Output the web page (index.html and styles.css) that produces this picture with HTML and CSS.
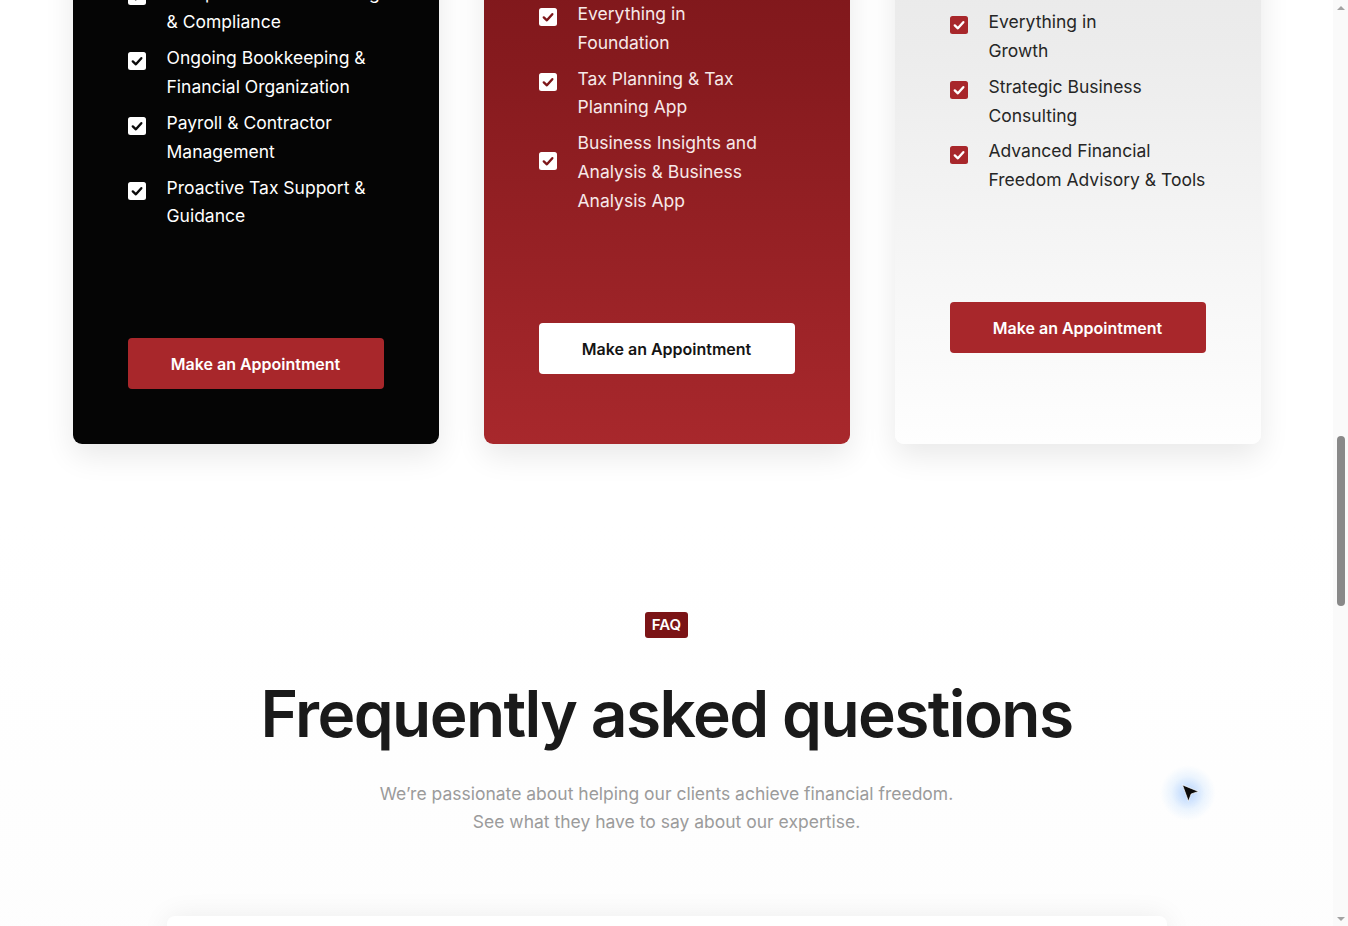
FILE: index.html
```html
<!DOCTYPE html>
<html lang="en">
<head>
<meta charset="utf-8">
<title>Pricing &amp; FAQ</title>
<link rel="stylesheet" href="styles.css">
</head>
<body>
<section class="pricing" id="pricing">
  <div class="section-intro">
    <span class="tag">Pricing</span>
    <h2 class="section-title">Plans built for your growth</h2>
    <p class="section-sub">Pick the level of support that fits your business today.<br>Upgrade any time as you grow.</p>
  </div>
  <div class="plans">
    <article class="plan plan-dark">
      <div class="plan-head">
        <h3 class="plan-name">Foundation</h3>
        <p class="plan-price">$499<span>/month</span></p>
        <p class="plan-desc">The essentials, done right.</p>
      </div>
      <ul class="plan-list">
        <li><svg class="check" viewBox="0 0 18 18"><rect width="18" height="18" rx="2.5"/><path d="M4.8 9.4 7.9 12.3 13.3 6.2"/></svg><span>Dedicated Accountant</span></li>
        <li><svg class="check" viewBox="0 0 18 18"><rect width="18" height="18" rx="2.5"/><path d="M4.8 9.4 7.9 12.3 13.3 6.2"/></svg><span>Comprehensive Tax Filing &amp; Compliance</span></li>
        <li><svg class="check" viewBox="0 0 18 18"><rect width="18" height="18" rx="2.5"/><path d="M4.8 9.4 7.9 12.3 13.3 6.2"/></svg><span>Ongoing Bookkeeping &amp; Financial Organization</span></li>
        <li><svg class="check" viewBox="0 0 18 18"><rect width="18" height="18" rx="2.5"/><path d="M4.8 9.4 7.9 12.3 13.3 6.2"/></svg><span>Payroll &amp; Contractor Management</span></li>
        <li><svg class="check" viewBox="0 0 18 18"><rect width="18" height="18" rx="2.5"/><path d="M4.8 9.4 7.9 12.3 13.3 6.2"/></svg><span>Proactive Tax Support &amp; Guidance</span></li>
      </ul>
      <a class="plan-btn" href="#">Make an Appointment</a>
    </article>

    <article class="plan plan-featured">
      <div class="plan-head">
        <h3 class="plan-name">Growth</h3>
        <p class="plan-price">$999<span>/month</span></p>
        <p class="plan-desc">For growing businesses that want a clear plan and better insight into every number that matters.</p>
      </div>
      <ul class="plan-list">
        <li><svg class="check" viewBox="0 0 18 18"><rect width="18" height="18" rx="2.5"/><path d="M4.8 9.4 7.9 12.3 13.3 6.2"/></svg><span>Everything in<br>Foundation</span></li>
        <li><svg class="check" viewBox="0 0 18 18"><rect width="18" height="18" rx="2.5"/><path d="M4.8 9.4 7.9 12.3 13.3 6.2"/></svg><span>Tax Planning &amp; Tax Planning App</span></li>
        <li><svg class="check" viewBox="0 0 18 18"><rect width="18" height="18" rx="2.5"/><path d="M4.8 9.4 7.9 12.3 13.3 6.2"/></svg><span>Business Insights and Analysis &amp; Business Analysis App</span></li>
      </ul>
      <a class="plan-btn" href="#">Make an Appointment</a>
    </article>

    <article class="plan plan-light">
      <div class="plan-head">
        <h3 class="plan-name">Freedom</h3>
        <p class="plan-price">$1,999<span>/month</span></p>
        <p class="plan-desc">Strategic, hands-on guidance for owners who are ready to build lasting financial freedom.</p>
      </div>
      <ul class="plan-list">
        <li><svg class="check" viewBox="0 0 18 18"><rect width="18" height="18" rx="2.5"/><path d="M4.8 9.4 7.9 12.3 13.3 6.2"/></svg><span>Everything in<br>Growth</span></li>
        <li><svg class="check" viewBox="0 0 18 18"><rect width="18" height="18" rx="2.5"/><path d="M4.8 9.4 7.9 12.3 13.3 6.2"/></svg><span>Strategic Business Consulting</span></li>
        <li><svg class="check" viewBox="0 0 18 18"><rect width="18" height="18" rx="2.5"/><path d="M4.8 9.4 7.9 12.3 13.3 6.2"/></svg><span>Advanced Financial Freedom Advisory &amp; Tools</span></li>
      </ul>
      <a class="plan-btn" href="#">Make an Appointment</a>
    </article>
  </div>
</section>

<section class="faq" id="faq">
  <div class="section-intro">
    <span class="tag tag-faq">FAQ</span>
    <h2 class="faq-title">Frequently asked questions</h2>
    <p class="faq-sub">We’re passionate about helping our clients achieve financial freedom.<br>See what they have to say about our expertise.</p>
  </div>
  <div class="faq-list">
    <div class="faq-item"><span>What kinds of businesses do you work with?</span><span class="faq-plus">+</span></div>
    <div class="faq-item"><span>Can I switch plans later?</span><span class="faq-plus">+</span></div>
    <div class="faq-item"><span>Do you work with clients remotely?</span><span class="faq-plus">+</span></div>
    <div class="faq-item"><span>How does the first appointment work?</span><span class="faq-plus">+</span></div>
    <div class="faq-item"><span>Which accounting software do you support?</span><span class="faq-plus">+</span></div>
  </div>
</section>

<footer class="site-footer">© Financial Freedom Partners. All rights reserved.</footer>

<div class="scrollbar" aria-hidden="true">
  <span class="sb-arrow sb-up"></span>
  <span class="sb-track"><span class="sb-thumb"></span></span>
  <span class="sb-arrow sb-down"></span>
</div>

<div class="cursor" aria-hidden="true">
  <svg viewBox="0 0 20 20"><path d="M3 2.5 17 8.2 10.6 10.4 8.2 16.8Z"/></svg>
</div>

<script src="script.js"></script>
</body>
</html>
```

FILE: styles.css
```css
* { box-sizing: border-box; }

html, body { margin: 0; padding: 0; }

body {
  margin-right: 15px;
  font-family: Inter, "Noto Sans", "Liberation Sans", sans-serif;
  color: #1a1a1a;
  background: #ffffff;
}

.section-intro {
  display: flex;
  flex-direction: column;
  align-items: center;
  text-align: center;
}

.tag {
  display: inline-block;
  background: #7b1416;
  color: #ffffff;
  font-size: 15px;
  font-weight: 600;
  line-height: 18px;
  padding: 4px 7px;
  border-radius: 3px;
}

/* ---------- Pricing ---------- */
.pricing {
  padding: 110px 0 80px;
  background: #ffffff;
}

.section-title {
  margin: 40px 0 0;
  font-size: 56px;
  line-height: 1.2;
  font-weight: 600;
  letter-spacing: -0.02em;
}

.section-sub {
  margin: 26px 0 0;
  font-size: 17.5px;
  line-height: 28px;
  color: #999999;
}

.plans {
  max-width: 1188px;
  margin: 80px auto 0;
  display: grid;
  grid-template-columns: repeat(3, 1fr);
  gap: 45px;
}

.plan {
  display: flex;
  flex-direction: column;
  padding: 55px 55px 55px;
  border-radius: 9px;
  box-shadow: 0 12px 30px rgba(0, 0, 0, 0.09);
}

.plan-dark {
  background: #050505;
  color: #ffffff;
}

.plan-featured {
  background: linear-gradient(180deg, #6a1013 0%, #861a1e 50%, #a8282c 100%);
  color: #f7e9e9;
}

.plan-light {
  background: linear-gradient(180deg, #e2e2e2 0%, #ececec 48%, #fefefe 100%);
  color: #262626;
}

.plan-name {
  margin: 0 0 8px;
  font-size: 26px;
  line-height: 34px;
  font-weight: 600;
}

.plan-price {
  margin: 0 0 12px;
  font-size: 44px;
  line-height: 53px;
  font-weight: 700;
  letter-spacing: -0.02em;
}

.plan-price span {
  font-size: 17px;
  font-weight: 500;
  letter-spacing: 0;
  opacity: 0.75;
}

.plan-desc {
  margin: 0;
  font-size: 17px;
  line-height: 1.7;
  opacity: 0.8;
}

.plan-list {
  list-style: none;
  margin: 28px 0 0;
  padding: 0;
  display: flex;
  flex-direction: column;
  gap: 7px;
}

.plan-dark .plan-list { margin-top: 46px; }
.plan-light .plan-list { margin-top: 65px; }

.plan-list li {
  display: flex;
  align-items: center;
  gap: 21px;
  font-size: 17.5px;
  line-height: 28.9px;
}

.check {
  flex: 0 0 18px;
  width: 18px;
  height: 18px;
  margin-bottom: 23px;
}

.check rect { fill: #ffffff; }

.check path {
  fill: none;
  stroke: #0a0a0a;
  stroke-width: 2.4;
  stroke-linecap: round;
  stroke-linejoin: round;
}

.plan-featured .check path { stroke: #7d171a; }
.plan-light .check rect { fill: #a8272b; }
.plan-light .check path { stroke: #ffffff; }

.plan-btn {
  display: flex;
  align-items: center;
  justify-content: center;
  height: 51px;
  margin-top: 107px;
  border-radius: 4px;
  background: #a8272b;
  color: #ffffff;
  font-size: 16px;
  font-weight: 600;
  text-decoration: none;
}

.plan-featured .plan-btn {
  background: #ffffff;
  color: #141414;
}

/* ---------- FAQ ---------- */
.faq {
  padding: 88px 0 120px;
  background: linear-gradient(180deg, #ffffff 0%, #fbfbfb 100%);
}

.faq-title {
  margin: 38px 0 0;
  font-size: 64px;
  line-height: 1.2;
  font-weight: 600;
  letter-spacing: -0.025em;
  color: #1a1a1a;
}

.faq-sub {
  margin: 27px 0 0;
  font-size: 17.5px;
  line-height: 28px;
  color: #9b9b9b;
}

.faq-list {
  max-width: 1000px;
  margin: 80px auto 0;
  display: flex;
  flex-direction: column;
  gap: 16px;
}

.faq-item {
  display: flex;
  justify-content: space-between;
  align-items: center;
  padding: 26px 32px;
  background: #ffffff;
  border-radius: 8px;
  box-shadow: 0 0 28px rgba(0, 0, 0, 0.07);
  font-size: 19px;
  font-weight: 600;
}

.faq-plus {
  font-size: 26px;
  font-weight: 400;
  color: #a8272b;
}

.site-footer {
  padding: 40px 0;
  text-align: center;
  font-size: 14px;
  color: #888888;
  background: #0a0a0a;
}

/* window scrollbar overlay */
.scrollbar {
  position: fixed;
  top: 0;
  right: 0;
  width: 15px;
  height: 100%;
  display: flex;
  flex-direction: column;
  background: #fafafa;
}

.sb-arrow {
  flex: 0 0 15px;
  display: flex;
  justify-content: center;
  align-items: center;
}

.sb-arrow::before {
  content: "";
  width: 0;
  height: 0;
  border-left: 4px solid transparent;
  border-right: 4px solid transparent;
}

.sb-up::before { border-bottom: 4px solid #a3a3a3; }
.sb-down::before { border-top: 4px solid #a3a3a3; }

.sb-track {
  flex: 1;
  padding-top: 421px;
  display: flex;
  justify-content: center;
}

.sb-thumb {
  width: 8px;
  height: 170px;
  border-radius: 4px;
  background: #898989;
}

/* custom cursor overlay */
.cursor {
  position: fixed;
  left: 1160px;
  top: 765px;
  width: 56px;
  height: 56px;
  border-radius: 50%;
  background: radial-gradient(circle, rgba(110, 170, 255, 0.5) 0%, rgba(160, 205, 255, 0.2) 42%, rgba(255, 255, 255, 0) 70%);
  display: flex;
  align-items: center;
  justify-content: center;
  pointer-events: none;
}

.cursor svg {
  width: 23px;
  height: 23px;
  margin: 0 0 0 4px;
}

.cursor path {
  fill: #0b0b0b;
  stroke: #ffffff;
  stroke-width: 0.6;
  stroke-linejoin: round;
}
```

FILE: script.js
```js
(function () {
  function place() {
    var list = document.querySelector('.plan-featured .plan-list');
    if (!list) return;
    var y = list.getBoundingClientRect().top + window.scrollY;
    window.scrollTo(0, Math.round(y));
  }
  if ('scrollRestoration' in history) history.scrollRestoration = 'manual';
  place();
  window.addEventListener('load', place);
})();
```
